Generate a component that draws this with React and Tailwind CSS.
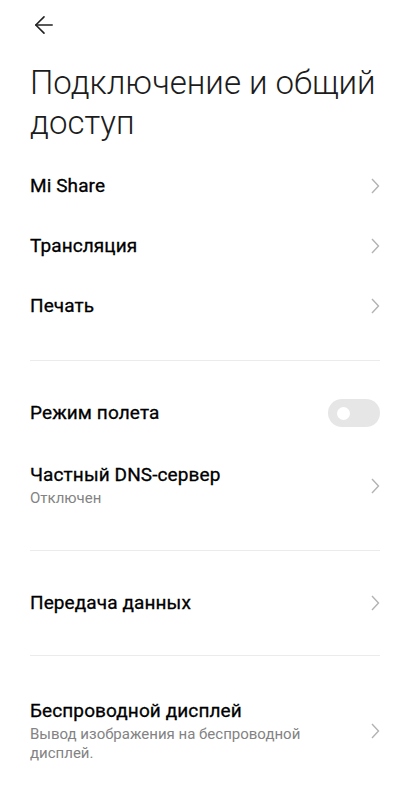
import { ArrowLeft } from "lucide-react";

function Chevron() {
  return (
    <svg width="10" height="16" viewBox="0 0 10 16" className="shrink-0">
      <path d="M2 1 L8.5 8 L2 15" fill="none" stroke="#b3b3b3" strokeWidth="1.4" />
    </svg>
  );
}

function Row({ title, subtitle, right, tall }) {
  return (
    <div className={tall ? "flex items-center justify-between py-[20px]" : "flex items-center justify-between h-[60px]"}>
      <div className="max-w-[300px]">
        <div className="text-[19px] font-normal text-black leading-6 tracking-[0.1px] [-webkit-text-stroke:0.3px_black]">
          {title}
        </div>
        {subtitle && (
          <div className="text-[15px] text-[#838383] leading-[19px] mt-[2px]">{subtitle}</div>
        )}
      </div>
      {right || <Chevron />}
    </div>
  );
}

function Toggle() {
  return (
    <div className="w-[52px] h-[28px] rounded-full bg-[#e6e6e6] flex items-center pl-[9px] shrink-0">
      <div className="w-[13px] h-[13px] rounded-full bg-white" />
    </div>
  );
}

export default function App() {
  return (
    <div className="w-[410px] h-[800px] bg-white font-['Roboto',sans-serif] overflow-hidden">
      {/* header */}
      <div className="h-[50px] flex items-center pl-[30px]">
        <ArrowLeft size={28} strokeWidth={1.4} color="#222" />
      </div>

      <h1 className="px-[30px] mt-[13px] text-[33px] font-light leading-[40px] text-[#1c1c1c]">
        Подключение и общий доступ
      </h1>

      <div className="px-[30px] mt-[13px]">
        <Row title="Mi Share" />
        <Row title="Трансляция" />
        <Row title="Печать" />
        <div className="mt-[24px] border-t border-[#ebebeb]" />

        <div className="py-[22px]">
          <Row title="Режим полета" right={<Toggle />} />
          <Row title="Частный DNS-сервер" subtitle="Отключен" tall />
        </div>
        <div className="border-t border-[#ebebeb]" />

        <div className="py-[22px]">
          <Row title="Передача данных" />
        </div>
        <div className="border-t border-[#ebebeb]" />

        <div className="pt-[23px]">
          <Row
            title="Беспроводной дисплей"
            subtitle="Вывод изображения на беспроводной дисплей."
            tall
          />
        </div>
      </div>
    </div>
  );
}
